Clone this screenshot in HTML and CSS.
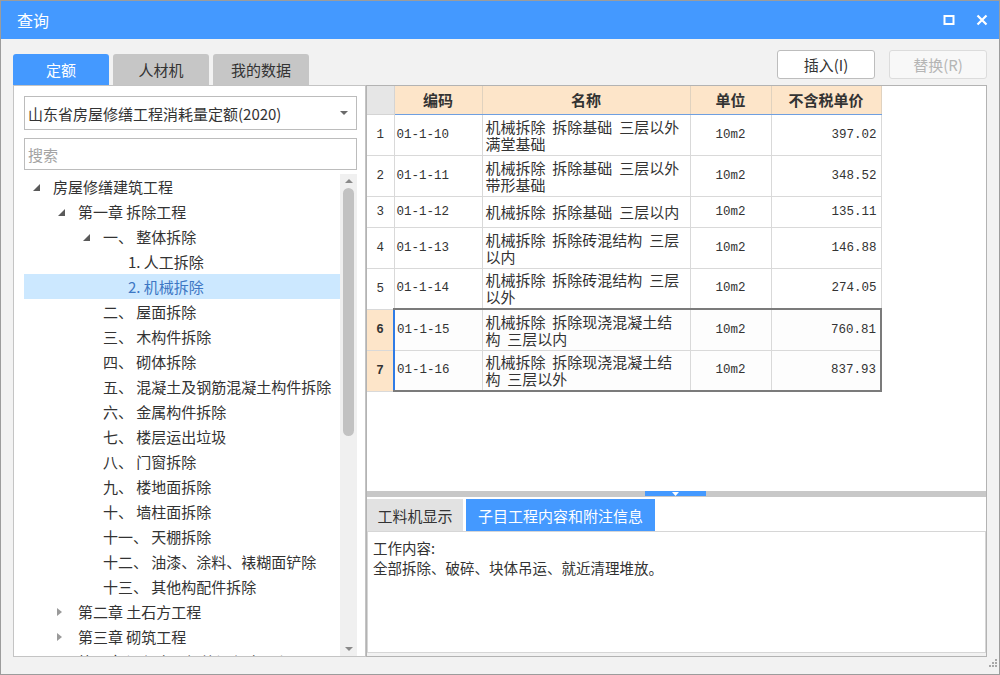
FILE: index.html
```html
<!DOCTYPE html>
<html lang="zh">
<head>
<meta charset="utf-8">
<title>查询</title>
<link rel="stylesheet" href="styles.css">
</head>
<body>
<div class="window">
  <header class="titlebar">
    <span class="title">查询</span>
    <div class="win-ctrls">
      <svg width="12" height="12" viewBox="0 0 12 12"><rect x="1.5" y="2" width="9" height="8" fill="none" stroke="#fff" stroke-width="2"/></svg>
      <svg width="12" height="12" viewBox="0 0 12 12"><path d="M1.5 1.5L10.5 10.5M10.5 1.5L1.5 10.5" stroke="#fff" stroke-width="2.2"/></svg>
    </div>
  </header>
  <div class="body">
    <div class="toprow">
      <div class="tabs">
        <div class="tab active">定额</div>
        <div class="tab">人材机</div>
        <div class="tab">我的数据</div>
      </div>
      <div class="actions">
        <button class="btn">插入(I)</button>
        <button class="btn disabled">替换(R)</button>
      </div>
    </div>
    <div class="main">
      <aside class="left">
        <div class="select"><span>山东省房屋修缮工程消耗量定额(2020)</span><i class="caret"></i></div>
        <div class="search">搜索</div>
        <div class="treewrap">
          <ul class="tree">
            <li class="l0"><i class="exp open"></i><span>房屋修缮建筑工程</span></li>
            <li class="l1"><i class="exp open"></i><span>第一章 拆除工程</span></li>
            <li class="l2"><i class="exp open"></i><span>一、 整体拆除</span></li>
            <li class="l3"><i class="exp"></i><span>1. 人工拆除</span></li>
            <li class="l3 sel"><i class="exp"></i><span>2. 机械拆除</span></li>
            <li class="l2"><i class="exp"></i><span>二、 屋面拆除</span></li>
            <li class="l2"><i class="exp"></i><span>三、 木构件拆除</span></li>
            <li class="l2"><i class="exp"></i><span>四、 砌体拆除</span></li>
            <li class="l2"><i class="exp"></i><span>五、 混凝土及钢筋混凝土构件拆除</span></li>
            <li class="l2"><i class="exp"></i><span>六、 金属构件拆除</span></li>
            <li class="l2"><i class="exp"></i><span>七、 楼层运出垃圾</span></li>
            <li class="l2"><i class="exp"></i><span>八、 门窗拆除</span></li>
            <li class="l2"><i class="exp"></i><span>九、 楼地面拆除</span></li>
            <li class="l2"><i class="exp"></i><span>十、 墙柱面拆除</span></li>
            <li class="l2"><i class="exp"></i><span>十一、 天棚拆除</span></li>
            <li class="l2"><i class="exp"></i><span>十二、 油漆、涂料、裱糊面铲除</span></li>
            <li class="l2"><i class="exp"></i><span>十三、 其他构配件拆除</span></li>
            <li class="l1"><i class="exp closed"></i><span>第二章 土石方工程</span></li>
            <li class="l1"><i class="exp closed"></i><span>第三章 砌筑工程</span></li>
            <li class="l1"><i class="exp closed"></i><span>第四章 混凝土及钢筋混凝土工程</span></li>
          </ul>
          <div class="vscroll">
            <span class="arr up"></span>
            <span class="thumb"></span>
            <span class="spacer"></span>
            <span class="arr down"></span>
          </div>
        </div>
      </aside>
      <section class="right">
        <div class="gridarea">
          <table class="grid">
            <colgroup>
              <col class="c-rn"><col class="c-code"><col class="c-name"><col class="c-unit"><col class="c-price">
            </colgroup>
            <thead>
              <tr><th class="rn"></th><th>编码</th><th>名称</th><th>单位</th><th>不含税单价</th></tr>
            </thead>
            <tbody>
              <tr class="two"><td class="rn">1</td><td class="code">01-1-10</td><td class="name">机械拆除 拆除基础 三层以外<br>满堂基础</td><td class="unit">10m2</td><td class="price">397.02</td></tr>
              <tr class="two"><td class="rn">2</td><td class="code">01-1-11</td><td class="name">机械拆除 拆除基础 三层以外<br>带形基础</td><td class="unit">10m2</td><td class="price">348.52</td></tr>
              <tr class="one"><td class="rn">3</td><td class="code">01-1-12</td><td class="name">机械拆除 拆除基础 三层以内</td><td class="unit">10m2</td><td class="price">135.11</td></tr>
              <tr class="two"><td class="rn">4</td><td class="code">01-1-13</td><td class="name">机械拆除 拆除砖混结构 三层<br>以内</td><td class="unit">10m2</td><td class="price">146.88</td></tr>
              <tr class="two"><td class="rn">5</td><td class="code">01-1-14</td><td class="name">机械拆除 拆除砖混结构 三层<br>以外</td><td class="unit">10m2</td><td class="price">274.05</td></tr>
              <tr class="two sel first"><td class="rn">6</td><td class="code">01-1-15</td><td class="name">机械拆除 拆除现浇混凝土结<br>构 三层以内</td><td class="unit">10m2</td><td class="price">760.81</td></tr>
              <tr class="two sel last"><td class="rn">7</td><td class="code">01-1-16</td><td class="name">机械拆除 拆除现浇混凝土结<br>构 三层以外</td><td class="unit">10m2</td><td class="price">837.93</td></tr>
            </tbody>
          </table>
        </div>
        <div class="splitter"><span class="handle"><svg width="7" height="4" viewBox="0 0 7 4"><path d="M0 0H7L3.5 4Z" fill="#fff"/></svg></span></div>
        <div class="btabs">
          <div class="btab">工料机显示</div>
          <div class="btab active">子目工程内容和附注信息</div>
        </div>
        <div class="info">
          <p>工作内容:</p>
          <p>全部拆除、破碎、块体吊运、就近清理堆放。</p>
        </div>
      </section>
    </div>
    <div class="status">
      <svg width="10" height="10" viewBox="0 0 10 10" fill="#a8a8a8">
        <rect x="8" y="0" width="2" height="2"/>
        <rect x="5" y="3" width="2" height="2"/><rect x="8" y="3" width="2" height="2"/>
        <rect x="2" y="6" width="2" height="2"/><rect x="5" y="6" width="2" height="2"/><rect x="8" y="6" width="2" height="2"/>
      </svg>
    </div>
  </div>
</div>
</body>
</html>
```

FILE: styles.css
```css
* { box-sizing: border-box; margin: 0; padding: 0; }
html, body { width: 1000px; height: 675px; overflow: hidden; }
body {
  font-family: "Noto Sans CJK SC", "Noto Sans", sans-serif;
  font-size: 15px;
  color: #333;
  background: #f2f2f2;
}
.window {
  width: 1000px;
  height: 675px;
  border: 1px solid #9c9c9c;
  display: flex;
  flex-direction: column;
  background: #f2f2f2;
}
.titlebar {
  height: 38px;
  flex: none;
  background: #4499ff;
  color: #fff;
  display: flex;
  align-items: center;
  justify-content: space-between;
  padding: 0 11px 0 16px;
}
.title { font-size: 16px; }
.win-ctrls { display: flex; align-items: center; gap: 21px; }
.win-ctrls svg { display: block; }

.body {
  flex: 1;
  display: flex;
  flex-direction: column;
  padding: 0 12px;
  min-height: 0;
}
.toprow {
  height: 46px;
  flex: none;
  display: flex;
  justify-content: space-between;
}
.tabs { display: flex; gap: 4px; align-self: flex-end; }
.tab {
  width: 96px;
  height: 31px;
  background: #c6c6c6;
  border-radius: 3px 3px 0 0;
  display: flex;
  align-items: center;
  justify-content: center;
  color: #333;
}
.tab.active { background: #4499ff; color: #fff; }
.actions { display: flex; gap: 14px; padding-top: 11px; }
.btn {
  width: 98px;
  height: 29px;
  border: 1px solid #bdbdbd;
  border-radius: 3px;
  background: #fff;
  font-family: inherit;
  font-size: 15px;
  color: #333;
}
.btn.disabled { color: #b5b5b5; border-color: #dcdcdc; background: #f8f8f8; }

.main {
  height: 572px;
  flex: none;
  display: flex;
}
.left {
  width: 353px;
  flex: none;
  background: #fff;
  border: 1px solid #c4c4c4;
  padding: 10px 8px 0 10px;
  display: flex;
  flex-direction: column;
}
.select {
  height: 34px;
  flex: none;
  border: 1px solid #bcbcbc;
  padding: 0 3px;
  display: flex;
  align-items: center;
  justify-content: space-between;
  white-space: nowrap;
}
.caret {
  width: 0; height: 0;
  border-left: 4px solid transparent;
  border-right: 4px solid transparent;
  border-top: 4px solid #6a6a6a;
  margin-right: 5px;
}
.search {
  margin-top: 8px;
  height: 32px;
  flex: none;
  border: 1px solid #bcbcbc;
  color: #a3a3a3;
  padding-left: 3px;
  display: flex;
  align-items: center;
}
.treewrap {
  margin-top: 4px;
  flex: 1;
  min-height: 0;
  display: flex;
  overflow: hidden;
}
.tree { flex: 1; list-style: none; overflow: hidden; }
.tree li {
  height: 25px;
  display: flex;
  align-items: center;
  white-space: nowrap;
  color: #333;
}
.tree li.sel { background: #cce8ff; color: #3d77c4; }
.tree .l0 { padding-left: 9px; }
.tree .l1 { padding-left: 34px; }
.tree .l2 { padding-left: 59px; }
.tree .l3 { padding-left: 84px; }
.exp { width: 20px; flex: none; height: 10px; position: relative; }
.exp.open::before {
  content: "";
  position: absolute;
  left: 0; top: 2px;
  border-left: 7px solid transparent;
  border-bottom: 7px solid #5a5a5a;
}
.exp.closed::before {
  content: "";
  position: absolute;
  left: -1px; top: 1px;
  border-left: 5px solid #9a9a9a;
  border-top: 4px solid transparent;
  border-bottom: 4px solid transparent;
}
.vscroll {
  width: 17px;
  flex: none;
  background: #f0f0f0;
  display: flex;
  flex-direction: column;
  align-items: center;
}
.arr { height: 14px; flex: none; display: flex; align-items: center; justify-content: center; }
.arr::before { content: ""; border-left: 4px solid transparent; border-right: 4px solid transparent; }
.arr.up::before { border-bottom: 4px solid #8a8a8a; }
.arr.down::before { border-top: 4px solid #8a8a8a; }
.thumb { width: 11px; height: 248px; flex: none; background: #c2c2c2; border-radius: 6px; }
.spacer { flex: 1; }

.right {
  flex: 1;
  min-width: 0;
  border: 1px solid #b3b3b3;
  background: #f2f2f2;
  display: flex;
  flex-direction: column;
}
.gridarea { height: 405px; flex: none; background: #fff; overflow: hidden; }
.grid {
  border-collapse: collapse;
  table-layout: fixed;
  width: 514px;
}
.c-rn { width: 27px; }
.c-code { width: 88px; }
.c-name { width: 208px; }
.c-unit { width: 81px; }
.c-price { width: 110px; }
.grid th {
  height: 28px;
  background: #fde5c9;
  font-weight: bold;
  font-size: 15px;
  color: #333;
  border-left: 1px solid #e0d2bf;
  border-right: 1px solid #e0d2bf;
  border-bottom: 1px solid #6f9fe0;
  padding: 0;
}
.grid th.rn { background: #e6e6e6; border-left: none; border-bottom: 1px solid #d4d4d4; border-right: 1px solid #d4d4d4; }
.grid td {
  border: 1px solid #d9d9d9;
  padding: 3px 3px;
  font-family: "Liberation Mono", "DejaVu Sans Mono", monospace;
  font-size: 12.5px;
  color: #333;
  vertical-align: middle;
  white-space: nowrap;
}
.grid tr.two td { height: 41px; }
.grid tr.one td { height: 31px; }
.grid td.rn { border-left: none; text-align: center; padding: 0; }
.grid td.code { padding-left: 2px; }
.grid td.name {
  font-family: "Noto Sans CJK SC", sans-serif;
  font-size: 15px;
  line-height: 17px;
  word-spacing: 3.5px;
  padding: 2px 3px;
}
.grid td.unit { text-align: center; }
.grid td.price { text-align: right; padding-right: 4px; }
.grid tr.sel td.rn { background: #fde5c9; font-weight: bold; }
.grid tr.sel td:not(.rn) { background: #fdfdfd; }
.grid tr.sel td.code { border-left: 2px solid #2f7be5; }
.grid tr.sel td.price { border-right: 2px solid #7b7b7b; }
.grid tr.first td:not(.rn) { border-top: 2px solid #7b7b7b; }
.grid tr.last td:not(.rn) { border-bottom: 2px solid #7b7b7b; }

.splitter {
  height: 6px;
  flex: none;
  background: #c8c8c8;
  display: flex;
}
.handle {
  margin-left: 278px;
  width: 61px;
  height: 5px;
  background: #4499ff;
  display: flex;
  justify-content: center;
  align-items: flex-start;
}
.handle svg { display: block; margin-top: 1px; }
.btabs {
  height: 34px;
  flex: none;
  background: #fff;
  display: flex;
  align-items: flex-end;
  gap: 3px;
}
.btab {
  height: 32px;
  padding: 0;
  background: #e2e2e2;
  display: flex;
  align-items: center;
  justify-content: center;
  color: #333;
  font-size: 15px;
  white-space: nowrap;
}
.btab:first-child { width: 96px; }
.btab.active { width: 189px; background: #4499ff; color: #fff; }
.info {
  flex: 1;
  background: #fff;
  border: 1px solid #d6d6d6;
  margin-bottom: 3px;
  padding: 6px 5px;
  font-size: 14.5px;
  line-height: 20px;
  color: #333;
}
.status {
  flex: 1;
  display: flex;
  justify-content: flex-end;
  align-items: flex-end;
  padding: 0 0 5px 0;
  margin-right: -10px;
}
.status svg { display: block; }
```
